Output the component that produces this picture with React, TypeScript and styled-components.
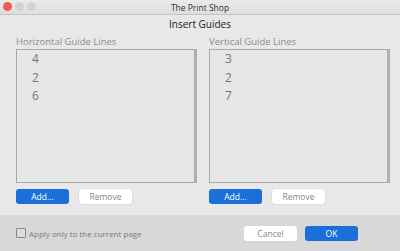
import React from "react";
import styled, { createGlobalStyle } from "styled-components";

const Global = createGlobalStyle`
  html, body { margin: 0; padding: 0; }
  body { width: 400px; height: 251px; overflow: hidden; background: #e8e8e8; font-family: "Open Sans", "Liberation Sans", sans-serif; }
`;

const Window = styled.div`
  width: 400px;
  height: 251px;
  display: flex;
  flex-direction: column;
  background: #e8e8e8;
`;

const TitleBar = styled.div`
  height: 14px;
  flex: none;
  position: relative;
  display: flex;
  align-items: center;
  justify-content: center;
  background: linear-gradient(#eaeaea, #dedede);
  border-bottom: 1px solid #c4c4c4;
  font-size: 8.5px;
  color: #2e2e2e;
`;

const Lights = styled.div`
  position: absolute;
  left: 3px;
  top: 2px;
  display: flex;
  gap: 3px;
`;

const Light = styled.span<{ $c: string }>`
  width: 9px;
  height: 9px;
  border-radius: 50%;
  background: ${(p) => p.$c};
`;

const Heading = styled.div`
  height: 18px;
  flex: none;
  display: flex;
  align-items: center;
  justify-content: center;
  font-size: 10px;
  color: #222;
`;

const Main = styled.div`
  display: flex;
  gap: 12px;
  padding: 3px 10px 0 16px;
  box-sizing: border-box;
`;

const Column = styled.div`
  flex: 1;
  display: flex;
  flex-direction: column;
`;

const GroupLabel = styled.div`
  font-size: 9.5px;
  color: #8c8c8c;
  height: 12px;
  line-height: 12px;
  margin-bottom: 1px;
`;

const ListBox = styled.div`
  height: 134px;
  box-sizing: border-box;
  background: #e6e6e6;
  border: 1px solid #a9a9a9;
  border-right: 3px solid #b0b0b0;
  padding: 0 0 0 15px;
  display: flex;
  flex-direction: column;
`;

const Item = styled.div`
  font-size: 12px;
  height: 18.5px;
  line-height: 18.5px;
  color: #777;
`;

const ButtonRow = styled.div`
  display: flex;
  gap: 10px;
  margin-top: 6px;
`;

const Button = styled.button<{ $primary?: boolean }>`
  width: 53px;
  height: 15px;
  padding: 0;
  border-radius: 3px;
  font-family: inherit;
  font-size: 8.5px;
  border: none;
  background: ${(p) => (p.$primary ? "#1a6fd9" : "#ffffff")};
  color: ${(p) => (p.$primary ? "#ffffff" : "#888")};
  box-shadow: ${(p) => (p.$primary ? "none" : "0 0 0 0.5px #d4d4d4")};
`;

const Footer = styled.div`
  margin-top: auto;
  height: 36px;
  background: #d8d8d8;
  display: flex;
  align-items: center;
  padding: 0 42px 0 16px;
`;

const CheckLabel = styled.label`
  display: flex;
  align-items: center;
  gap: 3px;
  font-size: 8px;
  color: #7a7a7a;
`;

const Box = styled.span`
  width: 8px;
  height: 8px;
  border: 1px solid #8a8a8a;
  background: #dcdcdc;
  border-radius: 1px;
`;

const FooterButtons = styled.div`
  margin-left: auto;
  display: flex;
  gap: 8px;
`;

export default function App() {
  return (
    <>
      <Global />
      <Window>
        <TitleBar>
          <Lights>
            <Light $c="#f25b55" />
            <Light $c="#d2d2d2" />
            <Light $c="#d2d2d2" />
          </Lights>
          The Print Shop
        </TitleBar>
        <Heading>Insert Guides</Heading>
        <Main>
          <Column>
            <GroupLabel>Horizontal Guide Lines</GroupLabel>
            <ListBox>
              <Item>4</Item>
              <Item>2</Item>
              <Item>6</Item>
            </ListBox>
            <ButtonRow>
              <Button $primary>Add...</Button>
              <Button>Remove</Button>
            </ButtonRow>
          </Column>
          <Column>
            <GroupLabel>Vertical Guide Lines</GroupLabel>
            <ListBox>
              <Item>3</Item>
              <Item>2</Item>
              <Item>7</Item>
            </ListBox>
            <ButtonRow>
              <Button $primary>Add...</Button>
              <Button>Remove</Button>
            </ButtonRow>
          </Column>
        </Main>
        <Footer>
          <CheckLabel>
            <Box />
            Apply only to the current page
          </CheckLabel>
          <FooterButtons>
            <Button>Cancel</Button>
            <Button $primary>OK</Button>
          </FooterButtons>
        </Footer>
      </Window>
    </>
  );
}
